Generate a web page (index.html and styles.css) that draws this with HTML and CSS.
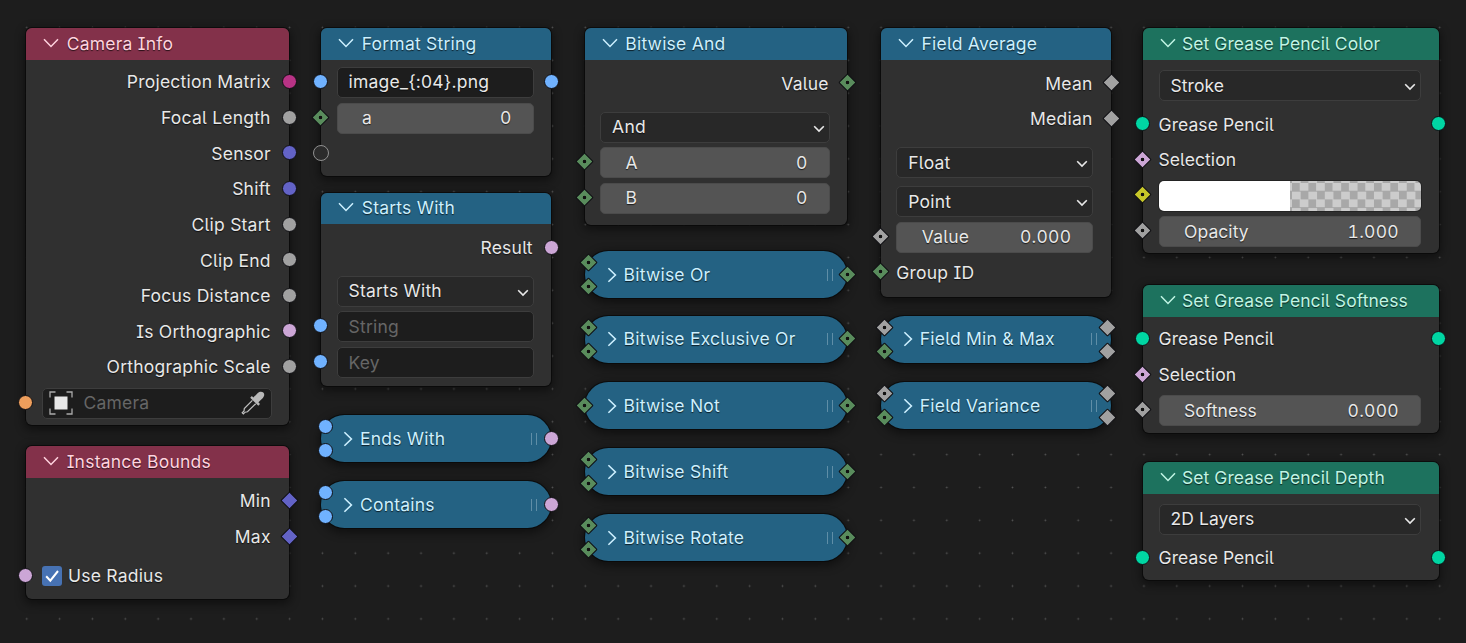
FILE: index.html
```html
<!DOCTYPE html>
<html lang="en">
<head>
    <meta charset="UTF-8">
    <meta name="viewport" content="width=device-width, initial-scale=1.0">
    <title>Geometry Nodes</title>
    <link rel="stylesheet" href="styles.css">
</head>
<body>
    <svg class="defs" width="0" height="0">
        <symbol id="open" viewBox="0 0 16 10"><path d="M1 1.2 8 8.4 15 1.2"/></symbol>
        <symbol id="closed" viewBox="0 0 10 16"><path d="M1.4 1.2 8.4 8 1.4 14.8"/></symbol>
        <symbol id="caret" viewBox="0 0 12 8"><path d="M1.2 1.2 6 6 10.8 1.2"/></symbol>
    </svg>

    <div class="canvas">
        <!-- Camera Info -->
        <div class="node input camera-info">
            <div class="header"><svg class="open"><use href="#open"/></svg><span>Camera Info</span></div>
            <div class="body">
                <div class="row out"><span>Projection Matrix</span><i class="socket right matrix"></i></div>
                <div class="row out"><span>Focal Length</span><i class="socket right float"></i></div>
                <div class="row out"><span>Sensor</span><i class="socket right vector"></i></div>
                <div class="row out"><span>Shift</span><i class="socket right vector"></i></div>
                <div class="row out"><span>Clip Start</span><i class="socket right float"></i></div>
                <div class="row out"><span>Clip End</span><i class="socket right float"></i></div>
                <div class="row out"><span>Focus Distance</span><i class="socket right float"></i></div>
                <div class="row out"><span>Is Orthographic</span><i class="socket right bool"></i></div>
                <div class="row out"><span>Orthographic Scale</span><i class="socket right float"></i></div>
                <div class="row">
                    <i class="socket left object"></i>
                    <div class="field object-field">
                        <svg class="object-icon" viewBox="0 0 24 24">
                            <path d="M1 6.500V1H6.500M17.500 1H23V6.500M23 17.500V23H17.500M6.500 23H1V17.500"/>
                            <rect x="5.500" y="5.500" width="13" height="13"/>
                        </svg>
                        <span class="placeholder">Camera</span>
                        <svg class="eyedropper" viewBox="0 0 24 24">
                            <path class="bulb" d="M12.300 6.600 16.800 2C18.500.300 21 .300 22.300 1.500 23.700 2.900 23.500 5.300 21.900 6.900L17.400 11.300 19 13 17.300 14.700 9.200 6.700 10.900 5Z"/>
                            <path class="tube" d="M11.400 9.400 3.300 17.600 3 20 1.200 21.700 2.400 22.900 4.100 21.200 6.500 20.800 14.700 12.700"/>
                        </svg>
                    </div>
                </div>
            </div>
        </div>

        <!-- Instance Bounds -->
        <div class="node input instance-bounds">
            <div class="header"><svg class="open"><use href="#open"/></svg><span>Instance Bounds</span></div>
            <div class="body">
                <div class="row out"><span>Min</span><i class="socket right diamond vector"></i></div>
                <div class="row out"><span>Max</span><i class="socket right diamond vector"></i></div>
                <div class="row spaced">
                    <i class="socket left bool"></i>
                    <svg class="checkbox" viewBox="0 0 20 20"><path d="M4.200 10.200 8.300 14.600 16 5"/></svg>
                    <span>Use Radius</span>
                </div>
            </div>
        </div>

        <!-- Format String -->
        <div class="node converter format-string">
            <div class="header"><svg class="open"><use href="#open"/></svg><span>Format String</span></div>
            <div class="body">
                <div class="row">
                    <i class="socket left string"></i>
                    <div class="field">image_{:04}.png</div>
                    <i class="socket right string"></i>
                </div>
                <div class="row"><i class="socket left diamond dot int"></i><div class="slider"><span>a</span><span>0</span></div></div>
                <div class="row"><i class="socket left virtual"></i></div>
            </div>
        </div>

        <!-- Starts With -->
        <div class="node converter starts-with">
            <div class="header"><svg class="open"><use href="#open"/></svg><span>Starts With</span></div>
            <div class="body">
                <div class="row out"><span>Result</span><i class="socket right bool"></i></div>
                <div class="row separated"><div class="dropdown"><span>Starts With</span><svg><use href="#caret"/></svg></div></div>
                <div class="row"><i class="socket left string"></i><div class="field placeholder">String</div></div>
                <div class="row"><i class="socket left string"></i><div class="field placeholder">Key</div></div>
            </div>
        </div>

        <div class="node converter collapsed ends-with">
            <i class="socket left upper string"></i><i class="socket left lower string"></i>
            <svg class="closed"><use href="#closed"/></svg><span>Ends With</span><b class="grip"></b>
            <i class="socket right bool"></i>
        </div>
        <div class="node converter collapsed contains">
            <i class="socket left upper string"></i><i class="socket left lower string"></i>
            <svg class="closed"><use href="#closed"/></svg><span>Contains</span><b class="grip"></b>
            <i class="socket right bool"></i>
        </div>

        <!-- Bitwise And -->
        <div class="node converter bitwise-and">
            <div class="header"><svg class="open"><use href="#open"/></svg><span>Bitwise And</span></div>
            <div class="body">
                <div class="row out"><span>Value</span><i class="socket right diamond dot int"></i></div>
                <div class="row separated"><div class="dropdown"><span>And</span><svg><use href="#caret"/></svg></div></div>
                <div class="row"><i class="socket left diamond dot int"></i><div class="slider"><span>A</span><span>0</span></div></div>
                <div class="row"><i class="socket left diamond dot int"></i><div class="slider"><span>B</span><span>0</span></div></div>
            </div>
        </div>

        <div class="node converter collapsed bitwise-or">
            <i class="socket left upper diamond dot int"></i><i class="socket left lower diamond dot int"></i>
            <svg class="closed"><use href="#closed"/></svg><span>Bitwise Or</span><b class="grip"></b>
            <i class="socket right diamond dot int"></i>
        </div>
        <div class="node converter collapsed bitwise-xor">
            <i class="socket left upper diamond dot int"></i><i class="socket left lower diamond dot int"></i>
            <svg class="closed"><use href="#closed"/></svg><span>Bitwise Exclusive Or</span><b class="grip"></b>
            <i class="socket right diamond dot int"></i>
        </div>
        <div class="node converter collapsed bitwise-not">
            <i class="socket left diamond dot int"></i>
            <svg class="closed"><use href="#closed"/></svg><span>Bitwise Not</span><b class="grip"></b>
            <i class="socket right diamond dot int"></i>
        </div>
        <div class="node converter collapsed bitwise-shift">
            <i class="socket left upper diamond dot int"></i><i class="socket left lower diamond dot int"></i>
            <svg class="closed"><use href="#closed"/></svg><span>Bitwise Shift</span><b class="grip"></b>
            <i class="socket right diamond dot int"></i>
        </div>
        <div class="node converter collapsed bitwise-rotate">
            <i class="socket left upper diamond dot int"></i><i class="socket left lower diamond dot int"></i>
            <svg class="closed"><use href="#closed"/></svg><span>Bitwise Rotate</span><b class="grip"></b>
            <i class="socket right diamond dot int"></i>
        </div>

        <!-- Field Average -->
        <div class="node converter field-average">
            <div class="header"><svg class="open"><use href="#open"/></svg><span>Field Average</span></div>
            <div class="body">
                <div class="row out"><span>Mean</span><i class="socket right diamond float"></i></div>
                <div class="row out"><span>Median</span><i class="socket right diamond float"></i></div>
                <div class="row separated"><div class="dropdown"><span>Float</span><svg><use href="#caret"/></svg></div></div>
                <div class="row spaced"><div class="dropdown"><span>Point</span><svg><use href="#caret"/></svg></div></div>
                <div class="row"><i class="socket left diamond dot float"></i><div class="slider"><span>Value</span><span>0.000</span></div></div>
                <div class="row"><i class="socket left diamond dot int"></i><span>Group ID</span></div>
            </div>
        </div>

        <div class="node converter collapsed field-min-max">
            <i class="socket left upper diamond dot float"></i><i class="socket left lower diamond dot int"></i>
            <svg class="closed"><use href="#closed"/></svg><span>Field Min &amp; Max</span><b class="grip"></b>
            <i class="socket right upper diamond float"></i><i class="socket right lower diamond float"></i>
        </div>
        <div class="node converter collapsed field-variance">
            <i class="socket left upper diamond dot float"></i><i class="socket left lower diamond dot int"></i>
            <svg class="closed"><use href="#closed"/></svg><span>Field Variance</span><b class="grip"></b>
            <i class="socket right upper diamond float"></i><i class="socket right lower diamond float"></i>
        </div>

        <!-- Grease Pencil -->
        <div class="node geometry gp-color">
            <div class="header"><svg class="open"><use href="#open"/></svg><span>Set Grease Pencil Color</span></div>
            <div class="body">
                <div class="row"><div class="dropdown"><span>Stroke</span><svg><use href="#caret"/></svg></div></div>
                <div class="row spaced"><i class="socket left geo"></i><span>Grease Pencil</span><i class="socket right geo"></i></div>
                <div class="row"><i class="socket left diamond dot bool"></i><span>Selection</span></div>
                <div class="row"><i class="socket left diamond dot color"></i><div class="swatch"><div class="solid"></div><div class="checker"></div></div></div>
                <div class="row"><i class="socket left diamond dot float"></i><div class="slider"><span>Opacity</span><span>1.000</span></div></div>
            </div>
        </div>

        <div class="node geometry gp-softness">
            <div class="header"><svg class="open"><use href="#open"/></svg><span>Set Grease Pencil Softness</span></div>
            <div class="body">
                <div class="row"><i class="socket left geo"></i><span>Grease Pencil</span><i class="socket right geo"></i></div>
                <div class="row"><i class="socket left diamond dot bool"></i><span>Selection</span></div>
                <div class="row"><i class="socket left diamond dot float"></i><div class="slider"><span>Softness</span><span>0.000</span></div></div>
            </div>
        </div>

        <div class="node geometry gp-depth">
            <div class="header"><svg class="open"><use href="#open"/></svg><span>Set Grease Pencil Depth</span></div>
            <div class="body">
                <div class="row"><div class="dropdown"><span>2D Layers</span><svg><use href="#caret"/></svg></div></div>
                <div class="row spaced"><i class="socket left geo"></i><span>Grease Pencil</span><i class="socket right geo"></i></div>
            </div>
        </div>
    </div>
</body>
</html>
```
FILE: styles.css
```css
* {
    box-sizing: border-box;
}
body {
    margin: 0;
    background-color: #1d1d1d;
    color: #e8e8e8;
    font-family: Inter, 'Liberation Sans', sans-serif;
    font-size: 17.5px;
    line-height: 22px;
    letter-spacing: 0.22px;
    font-feature-settings: "cv05", "cv08";
}
.defs {
    position: absolute;
}
.canvas {
    position: relative;
    width: 1466px;
    height: 643px;
    overflow: hidden;
    background-image: radial-gradient(circle at center, #555 0.4px, transparent 1.3px);
    background-size: 32.87px 32.87px;
    background-position: 10.3px 11px;
}
svg {
    fill: none;
    stroke: currentColor;
    flex: none;
}

/* nodes */
.node {
    position: absolute;
    border-radius: 6px;
    background-color: #303030;
    box-shadow: 0 0 0 1px rgba(8, 8, 8, 0.75), 0 3px 10px 2px rgba(0, 0, 0, 0.45);
    text-shadow: 0 1px 1px rgba(0, 0, 0, 0.7);
}
.header {
    display: flex;
    align-items: center;
    height: 31.7px;
    padding-left: 17px;
    border-radius: 6px 6px 0 0;
    background-color: var(--head);
    color: var(--title);
}
.input {
    --head: #83314a;
    --title: #ffd3df;
}
.converter {
    --head: #246283;
    --title: #cdf0ff;
}
.geometry {
    --head: #1d725e;
    --title: #c0f5e4;
    letter-spacing: 0.07px;
}
.open {
    width: 16px;
    height: 10px;
    margin: 0 7.7px 2px 0;
    stroke-width: 1.5;
}
.geometry .open {
    margin-right: 6px;
}
.body {
    padding: 4px 17.8px 0 15.5px;
}
.row {
    position: relative;
    display: flex;
    align-items: center;
    height: 35.64px;
    padding-top: 1.4px;
}
.row.out {
    justify-content: flex-end;
    padding-right: 0.8px;
}
.spaced {
    margin-top: 3.3px;
}
.separated {
    margin-top: 7.7px;
}

/* widgets */
.field, .dropdown, .slider {
    display: flex;
    align-items: center;
    flex: 1;
    height: 31px;
    border: 1px solid #3d3d3d;
    border-radius: 5px;
    padding: 0 12px 0 11px;
    background-color: #1d1d1d;
}
.placeholder {
    color: #666;
    text-shadow: none;
}
.dropdown {
    justify-content: space-between;
    padding-right: 4px;
    background-color: #282828;
}
.dropdown svg {
    width: 12px;
    height: 8px;
    margin-top: 3px;
    stroke-width: 1.6;
}
.slider {
    justify-content: space-between;
    padding: 0 21px 0 24.5px;
    border-color: #4b4b4b;
    background-color: #545454;
}
.slider span:last-child {
    letter-spacing: 0.25px;
    font-feature-settings: "tnum";
}
.object-field {
    padding: 0 6px;
}
.object-icon {
    width: 24px;
    height: 24px;
    margin-right: 11px;
    stroke: #aaa;
    stroke-width: 1.3;
}
.object-icon rect {
    fill: #e8e8e8;
    stroke: none;
}
.eyedropper {
    width: 24px;
    height: 24px;
    margin-left: auto;
    stroke: #c0c0c0;
    stroke-width: 1.2;
}
.eyedropper .bulb {
    fill: #b8b8b8;
    stroke: none;
}
.checkbox {
    width: 20px;
    height: 20px;
    margin: 0 6px 0 0.5px;
    border-radius: 3px;
    background-color: #4772b3;
    stroke: #fff;
    stroke-width: 2;
}
.swatch {
    display: flex;
    flex: 1;
    height: 30px;
    border-radius: 5px;
    overflow: hidden;
    box-shadow: 0 0 0 1px #232323;
}
.solid {
    flex: 1;
    background-color: #fff;
}
.checker {
    flex: 1;
    background: repeating-conic-gradient(#ccc 0 25%, #a8a8a8 0 50%) 2px 2px / 16.4px 16.4px;
}

/* sockets */
.socket {
    position: absolute;
    top: 50%;
    width: 15px;
    height: 15px;
    margin: -7.8px -7.5px 0;
    border: 1px solid #101014;
    border-radius: 50%;
    background-color: var(--socket);
}
.row .left {
    left: -16px;
}
.row .right {
    right: -18px;
}
.socket.diamond {
    width: 13px;
    height: 13px;
    margin: -6.8px -6.5px 0;
    border-radius: 1px;
    transform: rotate(45deg);
}
.socket.dot {
    background-image: radial-gradient(circle at center, #111 1.4px, transparent 2.1px);
}
.matrix { --socket: #b83385; }
.float { --socket: #a1a1a1; }
.vector { --socket: #6363c7; }
.bool { --socket: #cca6d6; }
.object { --socket: #ed9e5c; }
.string { --socket: #70b2ff; }
.int { --socket: #598c5c; }
.geo { --socket: #00d6a3; }
.color { --socket: #c7c729; }
.socket.virtual {
    width: 16px;
    height: 16px;
    margin: -8.5px -8px 0;
    border-color: #909090;
    background-color: #2b2b2b;
}

/* collapsed nodes */
.collapsed {
    display: flex;
    align-items: center;
    height: 47px;
    padding: 0 14px 0 22.4px;
    border-radius: 24px;
    background-color: var(--head);
    color: var(--title);
}
.closed {
    width: 10px;
    height: 16px;
    margin-right: 6.6px;
    stroke-width: 1.6;
}
.grip {
    width: 6px;
    height: 12px;
    margin-left: auto;
    border: solid #5f8ea7;
    border-width: 0 1.5px;
}
.collapsed .left {
    left: 0;
}
.collapsed .right {
    right: 0;
}
.collapsed .upper {
    top: 12px;
}
.collapsed .lower {
    top: 36px;
}
.collapsed .left.upper, .collapsed .left.lower {
    left: 4px;
}
.collapsed .right.upper, .collapsed .right.lower {
    right: 4px;
}

/* placement on the canvas */
.camera-info { left: 26px; top: 28.3px; width: 263.3px; height: 396.5px; }
.instance-bounds { left: 26px; top: 446px; width: 263.3px; height: 153.3px; }
.format-string { left: 321px; top: 28.3px; width: 230.3px; height: 147.4px; }
.starts-with { left: 321px; top: 192.5px; width: 230.3px; height: 193px; }
.ends-with { left: 321px; top: 415px; width: 230.3px; }
.contains { left: 321px; top: 481px; width: 230.3px; }
.bitwise-and { left: 584.6px; top: 28.3px; width: 262.8px; height: 197px; }
.bitwise-or { left: 584.6px; top: 251px; width: 262.8px; }
.bitwise-xor { left: 584.6px; top: 315.6px; width: 262.8px; }
.bitwise-not { left: 584.6px; top: 382px; width: 262.8px; }
.bitwise-shift { left: 584.6px; top: 448px; width: 262.8px; }
.bitwise-rotate { left: 584.6px; top: 514px; width: 262.8px; }
.field-average { left: 880.8px; top: 28.3px; width: 230.3px; height: 268.3px; }
.field-min-max { left: 880.8px; top: 315.6px; width: 230.3px; }
.field-variance { left: 880.8px; top: 382px; width: 230.3px; }
.gp-color { left: 1143px; top: 28.3px; width: 295.7px; height: 225px; }
.gp-softness { left: 1143px; top: 285.3px; width: 295.7px; height: 147.5px; }
.gp-depth { left: 1143px; top: 462px; width: 295.7px; height: 118px; }

.instance-bounds .body, .starts-with .body, .bitwise-and .body, .field-average .body {
    padding-top: 5.3px;
}
.gp-color .body, .gp-depth .body {
    padding-top: 7.3px;
}
```
